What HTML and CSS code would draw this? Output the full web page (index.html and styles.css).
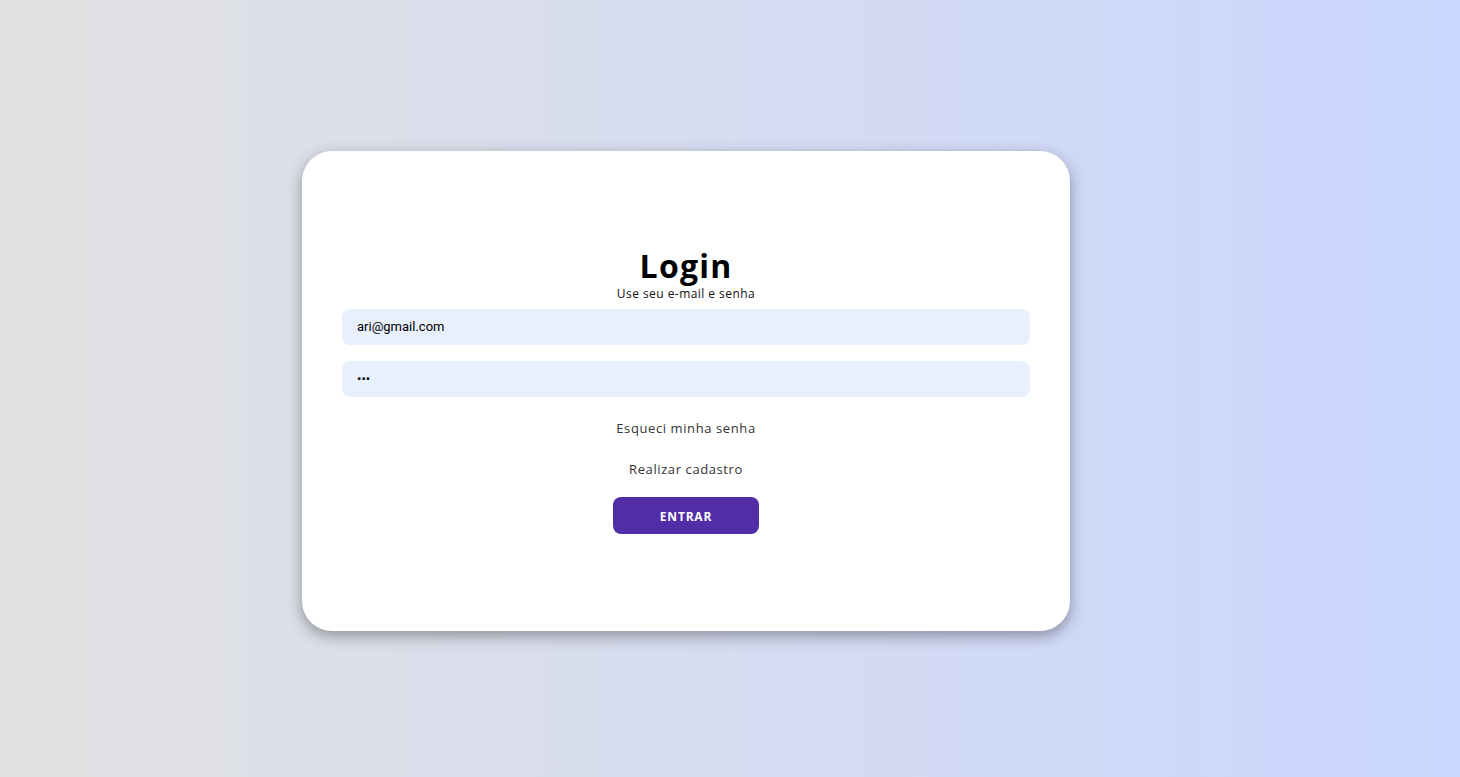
FILE: index.html
```html
<!DOCTYPE html>
<html>
  <head>
    <title>Login</title>
    <link rel="stylesheet" href="styles.css">
  </head>
  <body>
    <div class="container">
      <form class="login-form" onsubmit="return false">
        <h1>Login</h1>
        <span class="hint">Use seu e-mail e senha</span>
        <input type="email" class="field" value="ari@gmail.com" placeholder="Email">
        <input type="password" class="field" value="abc" placeholder="Senha">
        <a href="#">Esqueci minha senha</a>
        <a href="#">Realizar cadastro</a>
        <button type="submit">Entrar</button>
      </form>
    </div>
  </body>
</html>
```

FILE: styles.css
```css
* {
  margin: 0;
  padding: 0;
  box-sizing: border-box;
  font-family: "Open Sans", sans-serif;
}

body {
  background: linear-gradient(to right, #e2e2e2, #c9d6ff);
  display: flex;
  align-items: center;
  height: 100vh;
  padding: 5px 0 0 302px;
}

.container {
  background-color: #fff;
  border-radius: 30px;
  box-shadow: 0 5px 15px rgba(0, 0, 0, 0.35);
  width: 768px;
  height: 480px;
}

.login-form {
  display: flex;
  flex-direction: column;
  align-items: center;
  justify-content: center;
  height: 100%;
  padding: 0 40px 2px;
}

h1 {
  font-size: 32px;
  font-weight: 700;
  line-height: 37px;
  letter-spacing: 1.2px;
  color: #000;
}

.hint {
  font-size: 12px;
  line-height: 15px;
  letter-spacing: 0.45px;
  margin-top: 2px;
  color: #111;
}

.field {
  width: 100%;
  height: 36px;
  margin: 8px 0;
  padding: 10px 15px;
  border: none;
  border-radius: 8px;
  outline: none;
  background-color: #e8f0fe;
  font-family: Roboto, sans-serif;
  font-size: 13px;
  color: #000;
}

a {
  color: #333;
  font-size: 13px;
  line-height: 16px;
  letter-spacing: 0.6px;
  text-decoration: none;
  margin: 15px 0 10px;
}

button {
  background-color: #512da8;
  color: #fff;
  font-size: 12px;
  font-weight: 700;
  letter-spacing: 0.8px;
  text-transform: uppercase;
  padding: 10px 46px;
  border: 1px solid transparent;
  border-radius: 8px;
  margin-top: 10px;
  height: 37px;
  cursor: pointer;
}
```
